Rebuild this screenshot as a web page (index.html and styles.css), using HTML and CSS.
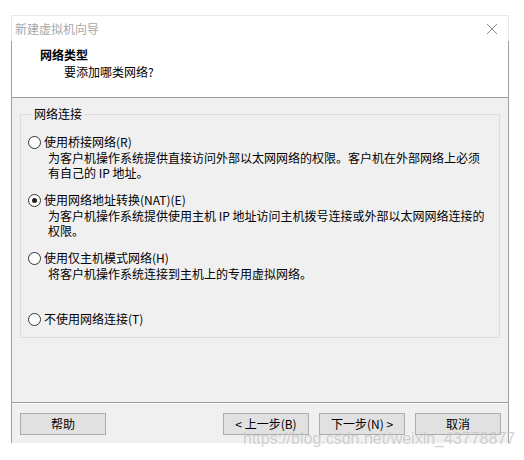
FILE: index.html
```html
<!DOCTYPE html>
<html lang="zh-CN">
<head>
<meta charset="utf-8">
<title>新建虚拟机向导</title>
<link rel="stylesheet" href="styles.css">
</head>
<body>
<div class="window">
  <div class="titlebar">
    <span class="title">新建虚拟机向导</span>
    <svg class="close" width="12" height="12" viewBox="0 0 12 12"><path d="M1 1 L11 11 M11 1 L1 11" stroke="#8a8a8a" stroke-width="1" fill="none"/></svg>
  </div>
  <div class="frame">
    <div class="header">
      <div class="h-title">网络类型</div>
      <div class="h-sub">要添加哪类网络?</div>
    </div>
    <div class="content">
      <fieldset class="group">
        <legend>网络连接</legend>
        <div class="option">
          <div class="label"><span class="radio"></span>使用桥接网络(R)</div>
          <div class="desc"><div>为客户机操作系统提供直接访问外部以太网网络的权限。客户机在外部网络上必须</div><div>有自己的 IP 地址。</div></div>
        </div>
        <div class="option">
          <div class="label"><span class="radio checked"></span>使用网络地址转换(NAT)(E)</div>
          <div class="desc"><div>为客户机操作系统提供使用主机 IP 地址访问主机拨号连接或外部以太网网络连接的</div><div>权限。</div></div>
        </div>
        <div class="option">
          <div class="label"><span class="radio"></span>使用仅主机模式网络(H)</div>
          <div class="desc"><div>将客户机操作系统连接到主机上的专用虚拟网络。</div></div>
        </div>
        <div class="option last">
          <div class="label"><span class="radio"></span>不使用网络连接(T)</div>
        </div>
      </fieldset>
    </div>
    <div class="buttons">
      <button class="btn">帮助</button>
      <div class="spacer"></div>
      <button class="btn">&lt; 上一步(B)</button>
      <button class="btn">下一步(N) &gt;</button>
      <button class="btn cancel">取消</button>
    </div>
  </div>
</div>
<div class="watermark">https://blog.csdn.net/weixin_43778877</div>
</body>
</html>
```
FILE: styles.css
```css
html, body {
  margin: 0;
  padding: 0;
  background: #ffffff;
}
body {
  font-family: "Noto Sans CJK SC", "Liberation Sans", sans-serif;
  font-size: 12px;
  color: #000;
  position: relative;
  width: 524px;
  height: 460px;
  overflow: hidden;
}
.window {
  margin: 15px 0 0 11px;
  width: 498px;
}
.titlebar {
  height: 25px;
  border: 1px solid #e8e8e8;
  border-bottom: none;
  background: #fff;
  display: flex;
  align-items: center;
  padding: 0 10px 0 3px;
}
.title {
  color: #a8a8a8;
  line-height: 22px;
  flex: 1;
}
.close {
  display: block;
  margin-top: 1px;
}
.frame {
  border-left: 1px solid #a0a0a0;
  border-right: 1px solid #a0a0a0;
  background: #f0f0f0;
}
.header {
  background: #fff;
  box-sizing: content-box;
  border-bottom: 1px solid #a0a0a0;
  padding: 5px 0 0 28px;
  height: 51px;
}
.h-title {
  font-weight: bold;
  line-height: 18px;
}
.h-sub {
  line-height: 16px;
  padding-left: 24px;
}
.content {
  padding: 8px 8px 64px 8px;
  border-bottom: 1px solid #a0a0a0;
}
.group {
  margin: 0;
  border: 1px solid #dcdcdc;
  padding: 12px 8px 10px 7px;
  min-width: 0;
}
.group legend {
  padding: 0 2px;
  margin-left: 4px;
  line-height: 16px;
}
.option {
  margin-bottom: 12px;
}
.option.last {
  margin-top: 30px;
  margin-bottom: 0;
}
.label {
  display: flex;
  align-items: center;
  line-height: 16px;
}
.radio {
  width: 11px;
  height: 11px;
  border: 1px solid #333;
  border-radius: 50%;
  background: #fff;
  margin-right: 3px;
  position: relative;
  flex: none;
}
.radio.checked::after {
  content: "";
  position: absolute;
  left: 3px;
  top: 3px;
  width: 5px;
  height: 5px;
  border-radius: 50%;
  background: #222;
}
.desc {
  padding-left: 20px;
}
.desc div {
  height: 15px;
  line-height: 15px;
  overflow: visible;
}
.buttons {
  display: flex;
  padding: 9px 7px 8px 8px;
  gap: 10px;
  border-top: 1px solid #fff;
}
.spacer {
  flex: 1;
}
.btn {
  width: 86px;
  height: 22px;
  box-sizing: border-box;
  border: 1px solid #adadad;
  background: #e1e1e1;
  font-family: "Noto Sans CJK SC", "Liberation Sans", sans-serif;
  font-size: 12px;
  color: #000;
  padding: 0;
  line-height: 18px;
}
.watermark {
  position: absolute;
  left: 243px;
  top: 430px;
  font-family: "Liberation Sans", sans-serif;
  font-size: 16px;
  color: rgba(195, 195, 195, 0.75);
  white-space: nowrap;
}
```
